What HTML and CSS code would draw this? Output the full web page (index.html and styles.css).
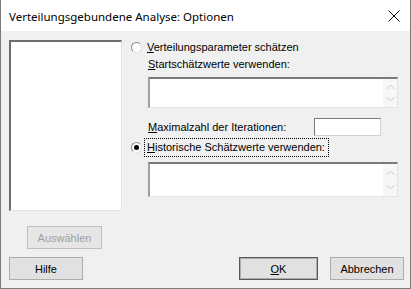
FILE: index.html
```html
<!DOCTYPE html>
<html lang="de">
<head>
    <meta charset="UTF-8">
    <title>Verteilungsgebundene Analyse: Optionen</title>
    <link rel="stylesheet" href="styles.css">
</head>
<body>
    <div class="dialog">
        <div class="titlebar">
            <span class="title">Verteilungsgebundene Analyse: Optionen</span>
            <svg class="close" width="12" height="12" viewBox="0 0 12 12">
                <path d="M0.5 0.5 L11.5 11.5 M11.5 0.5 L0.5 11.5" stroke="#000" stroke-width="1" fill="none"/>
            </svg>
        </div>
        <div class="content">
            <div class="top">
                <div class="left">
                    <div class="listbox"></div>
                    <button class="btn select-btn" disabled>Auswählen</button>
                </div>
                <div class="options">
                    <div class="radio-row">
                        <span class="radio"></span>
                        <span class="label"><u>V</u>erteilungsparameter schätzen</span>
                    </div>
                    <div class="sub-label"><u>S</u>tartschätzwerte verwenden:</div>
                    <div class="textbox">
                        <div class="arrows">
                            <svg width="9" height="6" viewBox="0 0 9 6"><path d="M0.5 5 L4.5 1 L8.5 5" stroke="#c8c8c8" fill="none"/></svg>
                            <svg width="9" height="6" viewBox="0 0 9 6"><path d="M0.5 1 L4.5 5 L8.5 1" stroke="#c8c8c8" fill="none"/></svg>
                        </div>
                    </div>
                    <div class="iter-row">
                        <span class="sub-label"><u>M</u>aximalzahl der Iterationen:</span>
                        <span class="input"></span>
                    </div>
                    <div class="radio-row second">
                        <span class="radio checked"></span>
                        <span class="label focus"><u>H</u>istorische Schätzwerte verwenden:</span>
                    </div>
                    <div class="textbox tall">
                        <div class="arrows">
                            <svg width="9" height="6" viewBox="0 0 9 6"><path d="M0.5 5 L4.5 1 L8.5 5" stroke="#c8c8c8" fill="none"/></svg>
                            <svg width="9" height="6" viewBox="0 0 9 6"><path d="M0.5 1 L4.5 5 L8.5 1" stroke="#c8c8c8" fill="none"/></svg>
                        </div>
                    </div>
                </div>
            </div>
            <div class="bottom">
                <button class="btn help-btn">Hilfe</button>
                <div class="spacer"></div>
                <button class="btn ok-btn"><u>O</u>K</button>
                <button class="btn cancel-btn">Abbrechen</button>
            </div>
        </div>
    </div>
</body>
</html>
```

FILE: styles.css
```css
body {
    margin: 0;
    background-color: #f0f0f0;
    font-family: "Liberation Sans", Arial, sans-serif;
    font-size: 11px;
    color: #000000;
}
.dialog {
    width: 411px;
    height: 289px;
    box-sizing: border-box;
    border: 1px solid #7a7a7a;
    border-top: none;
    display: flex;
    flex-direction: column;
    background-color: #f0f0f0;
}
.titlebar {
    height: 31px;
    background-color: #ffffff;
    display: flex;
    align-items: center;
    padding: 0 10px 0 8px;
    flex-shrink: 0;
}
.title {
    font-family: "Noto Sans", sans-serif;
    font-size: 11.5px;
    flex: 1;
    padding-top: 1px;
}
.close {
    margin-top: 1px;
}
.content {
    flex: 1;
    display: flex;
    flex-direction: column;
    padding: 9px 6px 0 8px;
}
.top {
    display: flex;
    gap: 9px;
}
.left {
    display: flex;
    flex-direction: column;
    width: 113px;
}
.listbox {
    height: 171px;
    box-sizing: border-box;
    background-color: #ffffff;
    border-top: 2px solid #6e6e6e;
    border-left: 2px solid #6e6e6e;
    border-right: 1px solid #e3e3e3;
    border-bottom: 1px solid #e3e3e3;
}
.btn {
    font-family: "Liberation Sans", Arial, sans-serif;
    font-size: 11px;
    color: #000000;
    background-color: #e1e1e1;
    border: 1px solid #adadad;
    height: 23px;
    padding: 0;
    box-sizing: border-box;
}
.select-btn {
    width: 75px;
    margin: 15px 0 0 18px;
    color: #a0a0a0;
    background-color: #e6e6e6;
    border-color: #bfbfbf;
}
.options {
    display: flex;
    flex-direction: column;
    width: 268px;
}
.radio-row {
    display: flex;
    align-items: center;
    height: 13px;
    margin-top: 1px;
}
.radio {
    width: 11px;
    height: 11px;
    box-sizing: border-box;
    border-radius: 50%;
    border: 1px solid #8a8a8a;
    border-right-color: #e3e3e3;
    border-bottom-color: #e3e3e3;
    background-color: #ffffff;
    margin-right: 5px;
    position: relative;
    flex-shrink: 0;
}
.radio.checked::after {
    content: "";
    position: absolute;
    left: 2px;
    top: 2px;
    width: 5px;
    height: 5px;
    border-radius: 50%;
    background-color: #000000;
}
.label {
    line-height: 13px;
}
.label.focus {
    outline: 1px dotted #000000;
    outline-offset: 2px;
    padding-right: 1px;
}
.sub-label {
    margin-left: 17px;
    line-height: 13px;
}
.options > .sub-label {
    margin-top: 4px;
}
.textbox {
    margin: 6px 0 0 17px;
    width: 250px;
    height: 31px;
    box-sizing: border-box;
    background-color: #ffffff;
    border-top: 2px solid #7a7a7a;
    border-left: 2px solid #a0a0a0;
    border-right: 1px solid #e3e3e3;
    border-bottom: 1px solid #e3e3e3;
    display: flex;
    justify-content: flex-end;
}
.textbox.tall {
    height: 35px;
    margin-top: 8px;
}
.arrows {
    width: 14px;
    background-color: #f7f7f7;
    display: flex;
    flex-direction: column;
    justify-content: space-around;
    align-items: center;
    padding: 2px 0;
}
.iter-row {
    display: flex;
    align-items: center;
    justify-content: space-between;
    margin-top: 10px;
    height: 18px;
}
.iter-row .sub-label {
    margin-top: 0;
}
.input {
    width: 67px;
    height: 18px;
    box-sizing: border-box;
    background-color: #ffffff;
    border: 1px solid #7a7a7a;
    border-right-color: #d0d0d0;
    border-bottom-color: #d0d0d0;
    margin-right: 18px;
}
.radio-row.second {
    margin-top: 5px;
}
.bottom {
    display: flex;
    margin-top: 8px;
    gap: 12px;
}
.spacer {
    flex: 1;
}
.help-btn {
    width: 74px;
}
.ok-btn {
    width: 79px;
    border: 1px solid #5a5a5a;
    box-shadow: inset 0 0 0 1px #adadad;
}
.cancel-btn {
    width: 74px;
}
```
